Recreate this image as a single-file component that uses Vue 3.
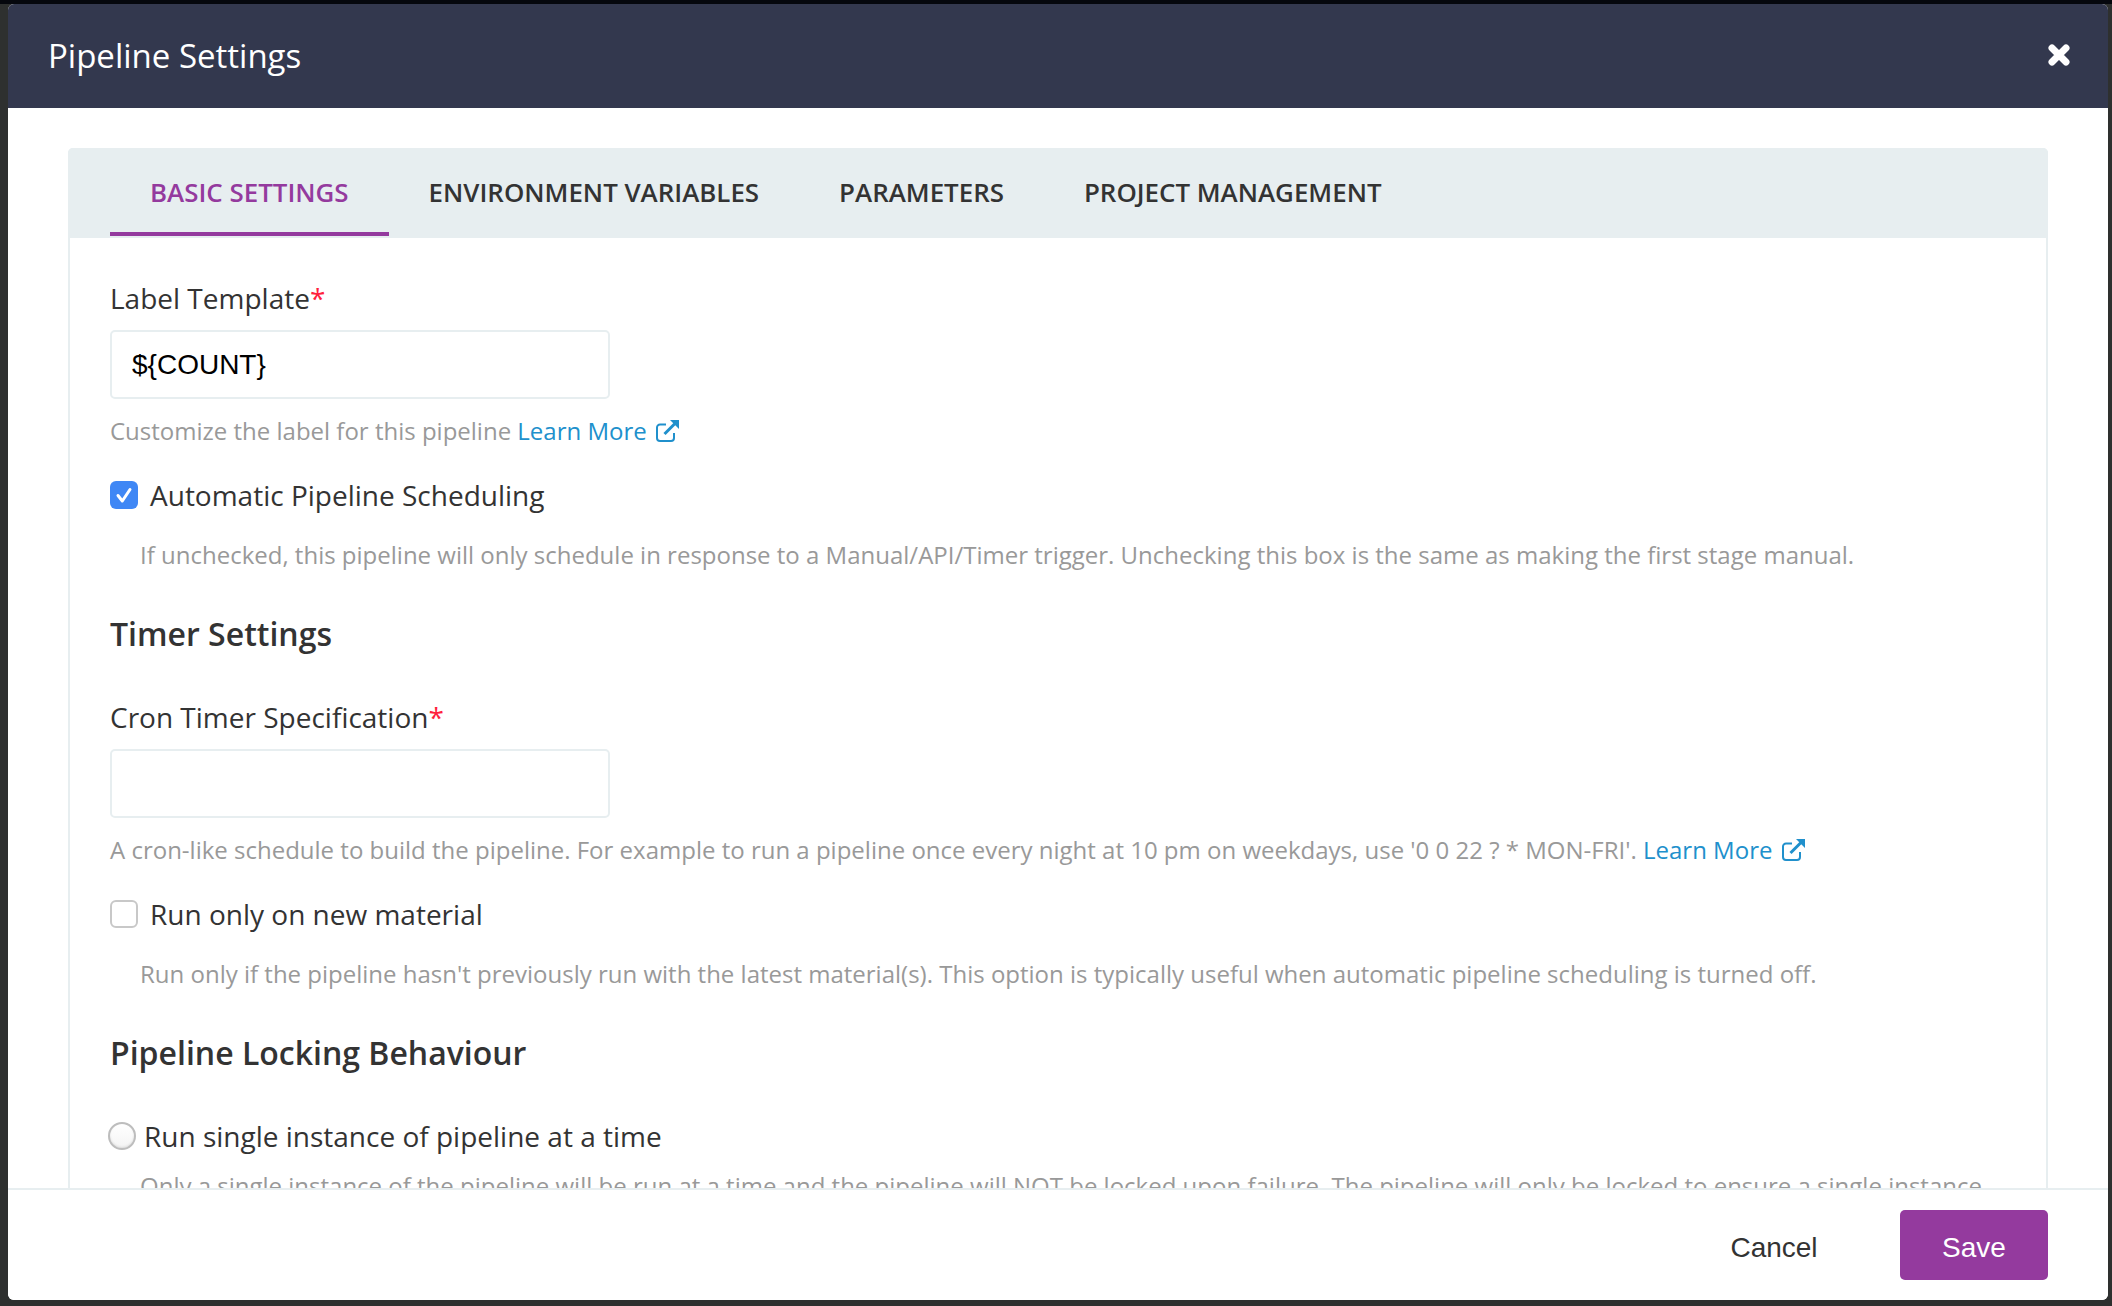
<script setup>
import { ref } from 'vue'

const tabs = ['Basic Settings', 'Environment Variables', 'Parameters', 'Project Management']
const activeTab = ref(0)
const labelTemplate = ref('${COUNT}')
const cronSpec = ref('')
const autoSchedule = ref(true)
const newMaterial = ref(false)
const lockMode = ref('')
</script>

<template>
  <div class="backdrop">
    <div class="modal">
      <header class="modal__head">
        <h1>Pipeline Settings</h1>
        <button type="button" class="close" aria-label="Close">
          <svg viewBox="0 0 22 22" width="22" height="22">
            <path d="M4 4 18 18M18 4 4 18" stroke="#fff" stroke-width="7" stroke-linecap="round" />
          </svg>
        </button>
      </header>

      <div class="modal__body">
        <div class="panel">
          <nav class="tabs">
            <a
              v-for="(tab, i) in tabs"
              :key="tab"
              class="tab"
              :class="{ active: i === activeTab }"
              @click="activeTab = i"
            >{{ tab }}</a>
          </nav>

          <div class="panel__content">
            <label class="label">Label Template<span class="req">*</span></label>
            <input v-model="labelTemplate" class="text" type="text" />
            <p class="help">
              Customize the label for this pipeline
              <a class="link">Learn More
                <svg class="ext" viewBox="0 0 24 22" width="24" height="22">
                  <path d="M11 4.5H5A3 3 0 0 0 2 7.5V18A3 3 0 0 0 5 21H16A3 3 0 0 0 19 18V13" fill="none" stroke="currentColor" stroke-width="2" />
                  <path d="M9.5 14 20 3.5" fill="none" stroke="currentColor" stroke-width="3" />
                  <path d="M15 0H24V9Z" fill="currentColor" />
                </svg>
              </a>
            </p>

            <label class="check" @click="autoSchedule = !autoSchedule">
              <span class="box" :class="{ on: autoSchedule }">
                <svg v-if="autoSchedule" viewBox="0 0 28 28" width="28" height="28">
                  <path d="M8 14.5 12.3 20 20 8.5" fill="none" stroke="#fff" stroke-width="3" stroke-linecap="round" stroke-linejoin="round" />
                </svg>
              </span>
              Automatic Pipeline Scheduling
            </label>
            <p class="help help--inset">If unchecked, this pipeline will only schedule in response to a Manual/API/Timer trigger. Unchecking this box is the same as making the first stage manual.</p>

            <h2>Timer Settings</h2>

            <label class="label">Cron Timer Specification<span class="req">*</span></label>
            <input v-model="cronSpec" class="text" type="text" />
            <p class="help">
              A cron-like schedule to build the pipeline. For example to run a pipeline once every night at 10 pm on weekdays, use '0 0 22 ? * MON-FRI'.
              <a class="link">Learn More
                <svg class="ext" viewBox="0 0 24 22" width="24" height="22">
                  <path d="M11 4.5H5A3 3 0 0 0 2 7.5V18A3 3 0 0 0 5 21H16A3 3 0 0 0 19 18V13" fill="none" stroke="currentColor" stroke-width="2" />
                  <path d="M9.5 14 20 3.5" fill="none" stroke="currentColor" stroke-width="3" />
                  <path d="M15 0H24V9Z" fill="currentColor" />
                </svg>
              </a>
            </p>

            <label class="check" @click="newMaterial = !newMaterial">
              <span class="box" :class="{ on: newMaterial }"></span>
              Run only on new material
            </label>
            <p class="help help--inset">Run only if the pipeline hasn't previously run with the latest material(s). This option is typically useful when automatic pipeline scheduling is turned off.</p>

            <h2>Pipeline Locking Behaviour</h2>

            <label class="radio" @click="lockMode = 'single'">
              <span class="dot"></span>
              Run single instance of pipeline at a time
            </label>
            <p class="help help--inset">Only a single instance of the pipeline will be run at a time and the pipeline will NOT be locked upon failure. The pipeline will only be locked to ensure a single instance.</p>
          </div>
        </div>
      </div>

      <footer class="modal__foot">
        <button type="button" class="btn btn--cancel">Cancel</button>
        <button type="button" class="btn btn--save">Save</button>
      </footer>
    </div>
  </div>
</template>

<style>
html,
body {
  margin: 0;
  background: #2e302f;
}
</style>

<style scoped>
.backdrop {
  width: 2112px;
  height: 1306px;
  box-sizing: border-box;
  padding: 4px 4px 6px 8px;
  background: #2e302f;
  position: relative;
  overflow: hidden;
  font-family: "Open Sans", "Liberation Sans", sans-serif;
  color: #333;
}
.backdrop::before {
  content: '';
  position: absolute;
  left: 0;
  right: 0;
  top: 0;
  height: 4px;
  background: #05070d;
}
.modal {
  position: relative;
  height: 100%;
  display: flex;
  flex-direction: column;
  background: #fff;
  border-radius: 6px;
  overflow: hidden;
}
.modal__head {
  flex: none;
  height: 104px;
  box-sizing: border-box;
  padding: 0 38px 2px 40px;
  display: flex;
  align-items: center;
  justify-content: space-between;
  background: #33384e;
  color: #fff;
}
.modal__head h1 {
  margin: 0;
  font-size: 33px;
  font-weight: 400;
}
.close {
  padding: 0;
  border: 0;
  background: none;
  display: flex;
}
.modal__body {
  flex: 1;
  min-height: 0;
  overflow: hidden;
  padding: 40px 60px 0;
}
.panel {
  border: 2px solid #e7eef0;
  border-radius: 5px 5px 0 0;
}
.tabs {
  display: flex;
  height: 90px;
  margin: -2px -2px 0;
  padding-left: 42px;
  background: #e7eef0;
  border-radius: 5px 5px 0 0;
}
.tab {
  padding: 4px 40px 0;
  height: 88px;
  box-sizing: border-box;
  display: flex;
  align-items: center;
  border-bottom: 4px solid transparent;
  text-transform: uppercase;
  font-size: 25.9px;
  font-weight: 600;
  color: #333;
  cursor: pointer;
}
.tab.active {
  color: #943a9e;
  border-bottom-color: #943a9e;
}
.panel__content {
  padding: 40px 40px 0;
}
.label {
  display: block;
  font-size: 28px;
  line-height: 40px;
  color: #333;
}
.req {
  color: #ff1f3d;
}
.text {
  display: block;
  width: 500px;
  height: 69px;
  box-sizing: border-box;
  margin-top: 12px;
  padding: 0 20px;
  border: 2px solid #e7eef0;
  border-radius: 5px;
  outline: 0;
  font-family: "Liberation Sans", Arial, sans-serif;
  font-size: 28px;
  color: #000;
}
.help {
  margin: 14px 0 0;
  font-size: 24px;
  line-height: 36px;
  color: #999;
}
.help--inset {
  margin: 22px 0 0 30px;
}
.radio + .help--inset {
  margin-top: 12px;
}
.link {
  color: #2090cc;
}
.ext {
  margin-left: 2px;
  vertical-align: -2px;
}
.check,
.radio {
  display: flex;
  align-items: center;
  font-size: 28px;
  line-height: 40px;
  color: #333;
  cursor: pointer;
}
.check {
  margin-top: 26px;
  gap: 12px;
}
.radio {
  margin-left: -2px;
  gap: 8px;
}
.box {
  flex: none;
  width: 28px;
  height: 28px;
  box-sizing: border-box;
  border: 2px solid #c8c8c8;
  border-radius: 6px;
  background: #fff;
  display: flex;
}
.box.on {
  border: 0;
  background: #3f87f5;
}
.dot {
  flex: none;
  width: 28px;
  height: 28px;
  box-sizing: border-box;
  border: 2px solid #bdbdbd;
  border-radius: 50%;
  background: linear-gradient(#fff, #f4f4f4);
  box-shadow: inset 0 -1px 2px #ddd;
}
h2 {
  margin: 39px 0 0;
  font-size: 32px;
  line-height: 44px;
  font-weight: 600;
  color: #333;
}
h2 + .label {
  margin-top: 41px;
}
h2 + .radio {
  margin-top: 41px;
}
.modal__foot {
  flex: none;
  height: 112px;
  box-sizing: border-box;
  display: flex;
  align-items: center;
  justify-content: flex-end;
  padding-right: 60px;
  border-top: 2px solid #e7eef0;
  background: #fff;
}
.btn {
  width: 148px;
  height: 70px;
  padding: 6px 0 0;
  border: 0;
  border-radius: 5px;
  font-family: "Liberation Sans", Arial, sans-serif;
  font-size: 28px;
  cursor: pointer;
}
.btn--cancel {
  margin-right: 52px;
  background: none;
  color: #333;
}
.btn--save {
  background: #943a9e;
  color: #fff;
}
</style>
